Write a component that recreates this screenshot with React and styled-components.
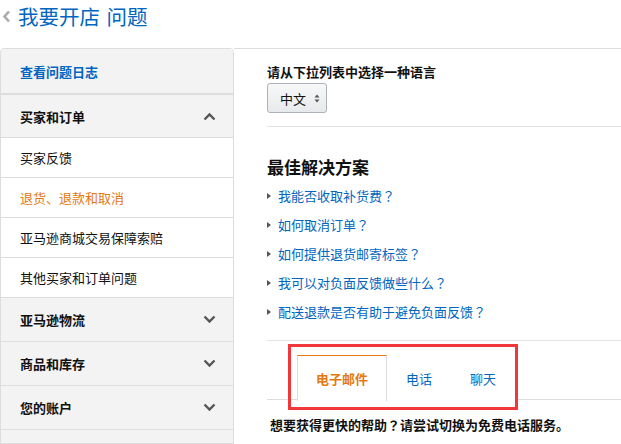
import React from "react";
import styled, { createGlobalStyle } from "styled-components";

const Global = createGlobalStyle`
  html, body { margin: 0; padding: 0; background: #fff; }
  body { font-family: "Noto Sans CJK SC", "Liberation Sans", sans-serif; font-size: 13px; color: #111; }
  * { box-sizing: border-box; }
`;

const JP = `"Noto Sans CJK JP", "Noto Sans CJK SC", sans-serif`;

const Header = styled.div`
  height: 48px;
  padding: 0 0 16px 2px;
  display: flex;
  align-items: center;
  gap: 7px;
`;

const Title = styled.h1`
  margin: 0;
  font-size: 20.5px;
  font-weight: 400;
  color: #0066c0;
  line-height: 32px;
  word-spacing: 2px;
`;

const Layout = styled.div`
  display: flex;
  align-items: flex-start;
`;

const Sidebar = styled.div`
  width: 234px;
  flex: none;
  border: 1px solid #ddd;
  border-radius: 4px 4px 0 0;
  overflow: hidden;
`;

const Row = styled.div`
  height: ${(p) => p.$h}px;
  display: flex;
  align-items: center;
  justify-content: space-between;
  padding: 0 17px 0 19px;
  background: ${(p) => (p.$gray ? "#f3f3f3" : "#fff")};
  border-bottom: ${(p) => p.$bw || 1}px solid #ddd;
  font-size: 13px;
  font-weight: ${(p) => (p.$bold ? 700 : 400)};
  color: ${(p) => p.$color || "#111"};
`;

const Main = styled.div`
  flex: 1;
  border-top: 1px solid #ddd;
  padding: 14px 0 0 33px;
`;

const Label = styled.div`
  font-weight: 700;
  line-height: 18px;
  font-size: 13px;
  color: #111;
`;

const Select = styled.div`
  margin-top: 2px;
  width: 60px;
  height: 30px;
  border: 1px solid #adb1b8;
  border-radius: 3px;
  background: linear-gradient(#f7f8fa, #e7e9ec);
  display: flex;
  align-items: center;
  padding-left: 12px;
  gap: 8px;
  font-size: 13px;
  color: #111;
`;

const Divider = styled.div`
  height: 1px;
  background: #e3e3e3;
  margin-top: ${(p) => p.$mt}px;
`;

const Heading = styled.h2`
  margin: 28px 0 2px;
  font-size: 17px;
  line-height: 24px;
  font-weight: 700;
  color: #111;
`;

const List = styled.ul`
  list-style: none;
  margin: 0;
  padding: 0;
`;

const Item = styled.li`
  height: 29px;
  line-height: 29px;
  display: flex;
  align-items: center;
  gap: 6px;
  color: #0066c0;
  font-size: 13px;
  font-family: ${JP};
`;

const Bullet = styled.span`
  width: 0;
  height: 0;
  border-top: 3.5px solid transparent;
  border-bottom: 3.5px solid transparent;
  border-left: 4px solid #555;
  margin-right: 1px;
`;

const TabSection = styled.div`
  position: relative;
  padding-top: 14px;
`;

const TabBar = styled.div`
  display: flex;
  height: 45px;
  border-bottom: 1px solid #ddd;
  padding-left: 30px;
`;

const Tab = styled.div`
  padding: 0 18px ${(p) => (p.$active ? "1px" : "0")};
  height: ${(p) => (p.$active ? "46px" : "45px")};
  margin-bottom: ${(p) => (p.$active ? "-1px" : "0")};
  display: flex;
  align-items: center;
  font-size: 13px;
  font-weight: ${(p) => (p.$active ? 700 : 400)};
  color: ${(p) => (p.$active ? "#e47911" : "#0066c0")};
  background: #fff;
  border-top: 1px solid ${(p) => (p.$active ? "#e47911" : "transparent")};
  border-left: 1px solid ${(p) => (p.$active ? "#ddd" : "transparent")};
  border-right: 1px solid ${(p) => (p.$active ? "#ddd" : "transparent")};
`;

const Highlight = styled.div`
  position: absolute;
  left: 21px;
  top: 3px;
  width: 230px;
  height: 66px;
  border: 3px solid #f2373b;
  pointer-events: none;
`;

const Help = styled.div`
  margin-top: 16px;
  padding-left: 3px;
  line-height: 18px;
  font-weight: 700;
  font-size: 13px;
  color: #111;
  font-family: ${JP};
`;

const Chevron = ({ up }) => (
  <svg width="13" height="9" viewBox="0 0 13 9">
    <polyline
      points={up ? "1.5,7.5 6.5,2.5 11.5,7.5" : "1.5,1.5 6.5,6.5 11.5,1.5"}
      fill="none"
      stroke="#555"
      strokeWidth="2.4"
    />
  </svg>
);

const BackIcon = () => (
  <svg width="9" height="13" viewBox="0 0 9 13">
    <polyline points="7,1.5 2.5,6.5 7,11.5" fill="none" stroke="#aaa" strokeWidth="2.6" />
  </svg>
);

const SortIcon = () => (
  <svg width="6" height="9" viewBox="0 0 6 9">
    <polygon points="0.5,3.5 5.5,3.5 3,0.5" fill="#555" />
    <polygon points="0.5,5.5 5.5,5.5 3,8.5" fill="#555" />
  </svg>
);

const links = [
  "我能否收取补货费？",
  "如何取消订单？",
  "如何提供退货邮寄标签？",
  "我可以对负面反馈做些什么？",
  "配送退款是否有助于避免负面反馈？",
];

export default function App() {
  return (
    <>
      <Global />
      <Header>
        <BackIcon />
        <Title>我要开店 问题</Title>
      </Header>
      <Layout>
        <Sidebar>
          <Row $h={46} $gray $bold $bw={2} $color="#0066c0">查看问题日志</Row>
          <Row $h={43} $gray $bold>
            买家和订单
            <Chevron up />
          </Row>
          <Row $h={40}>买家反馈</Row>
          <Row $h={40} $color="#e47911">退货、退款和取消</Row>
          <Row $h={40}>亚马逊商城交易保障索赔</Row>
          <Row $h={40}>其他买家和订单问题</Row>
          <Row $h={44} $gray $bold>
            亚马逊物流
            <Chevron />
          </Row>
          <Row $h={44} $gray $bold>
            商品和库存
            <Chevron />
          </Row>
          <Row $h={44} $gray $bold>
            您的账户
            <Chevron />
          </Row>
          <Row $h={14} $gray $bold $bw={0} />
        </Sidebar>
        <Main>
          <Label>请从下拉列表中选择一种语言</Label>
          <Select>
            中文
            <SortIcon />
          </Select>
          <Divider $mt={13} />
          <Heading>最佳解决方案</Heading>
          <List>
            {links.map((t) => (
              <Item key={t}>
                <Bullet />
                {t}
              </Item>
            ))}
          </List>
          <Divider $mt={14} />
          <TabSection>
            <TabBar>
              <Tab $active>电子邮件</Tab>
              <Tab>电话</Tab>
              <Tab>聊天</Tab>
            </TabBar>
            <Highlight />
            <Help>想要获得更快的帮助？请尝试切换为免费电话服务。</Help>
          </TabSection>
        </Main>
      </Layout>
    </>
  );
}
